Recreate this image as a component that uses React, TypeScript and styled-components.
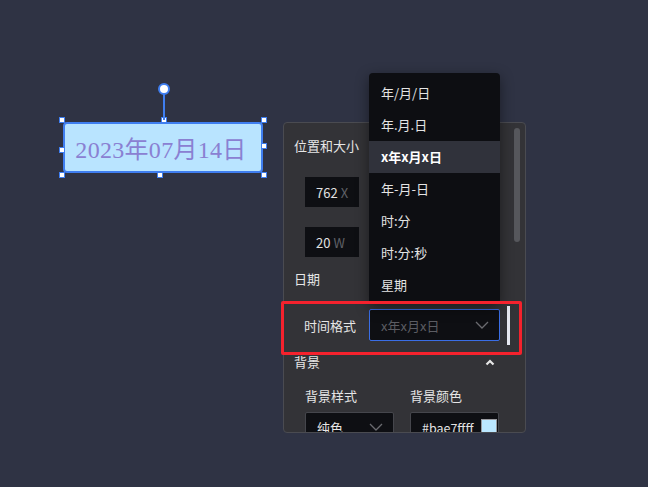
import React from "react";
import styled, { createGlobalStyle } from "styled-components";

const GlobalStyle = createGlobalStyle`
  html, body {
    margin: 0;
    padding: 0;
    background: #2f3344;
    overflow: hidden;
  }
  #root {
    height: 100vh;
  }
  * {
    box-sizing: border-box;
  }
`;

const Canvas = styled.div`
  position: relative;
  width: 100%;
  height: 100%;
  font-family: "Noto Sans CJK SC", "Noto Sans", sans-serif;
`;

/* ---------- date widget on the canvas ---------- */

const Widget = styled.div`
  position: absolute;
  left: 63px;
  top: 122px;
  width: 200px;
  height: 51px;
  border: 2px solid #3f7ef0;
  border-radius: 4px;
  background: #b9e4ff;
  display: flex;
  align-items: center;
  justify-content: center;
`;

const DateText = styled.span`
  font-family: "Liberation Serif", "Noto Sans CJK SC", serif;
  font-size: 24px;
  color: #8a80d2;
  margin-left: -4px;
  letter-spacing: 0.3px;
`;

const Handle = styled.span<{ $x: number; $y: number }>`
  position: absolute;
  left: ${(p) => p.$x - 3}px;
  top: ${(p) => p.$y - 3}px;
  width: 6px;
  height: 6px;
  background: #fff;
  border: 1.5px solid #3f7ef0;
`;

const RotateLine = styled.span`
  position: absolute;
  left: 98px;
  top: -32px;
  width: 2px;
  height: 28px;
  background: #3f7ef0;
`;

const RotateKnob = styled.span`
  position: absolute;
  left: 93px;
  top: -41px;
  width: 12px;
  height: 12px;
  border-radius: 50%;
  background: #fff;
  border: 2px solid #3f7ef0;
`;

const handles: [number, number][] = [
  [-3, -4],
  [99, -4],
  [199, -4],
  [-3, 26],
  [199, 22],
  [-3, 51],
  [95, 51],
  [199, 51],
];

/* ---------- property panel ---------- */

const Panel = styled.div`
  position: absolute;
  left: 283px;
  top: 122px;
  width: 243px;
  height: 311px;
  border: 1px solid #4a4b51;
  border-radius: 4px;
  background: #333337;
`;

const Body = styled.div`
  height: 100%;
  overflow: hidden;
  padding: 13px 0 0 10px;
  display: flex;
  flex-direction: column;
  color: #e6e6e6;
  font-size: 13px;
`;

const Title = styled.div<{ $mt?: number }>`
  height: 20px;
  line-height: 20px;
  margin-top: ${(p) => p.$mt ?? 0}px;
  display: flex;
  align-items: center;
  justify-content: space-between;
  padding-right: 30px;
`;

const Row = styled.div<{ $mt: number; $gap?: number }>`
  display: flex;
  align-items: center;
  gap: ${(p) => p.$gap ?? 16}px;
  margin-top: ${(p) => p.$mt}px;
  padding-left: 11px;
`;

const NumberBox = styled.div`
  width: 54px;
  height: 30px;
  background: #0e0f13;
  display: flex;
  align-items: center;
  padding-left: 11px;
  gap: 3px;
  color: #e2e2e2;
`;

const Unit = styled.span`
  color: #5f6066;
`;

const FormatRow = styled.div`
  display: flex;
  align-items: center;
  height: 32px;
  margin-top: 20px;
  padding-left: 10px;
`;

const FieldLabel = styled.span`
  width: 65px;
  color: #e6e6e6;
`;

const Select = styled.div<{ $w: number; $active?: boolean; $pr?: number }>`
  width: ${(p) => p.$w}px;
  height: ${(p) => (p.$active ? 32 : 30)}px;
  flex-shrink: 0;
  background: #0e0f13;
  border: 1px solid ${(p) => (p.$active ? "#3a6ee6" : "#45464c")};
  border-radius: 2px;
  display: flex;
  align-items: center;
  justify-content: space-between;
  padding: 0 ${(p) => p.$pr ?? 10}px 0 11px;
  overflow: hidden;
`;

const Placeholder = styled.span`
  color: #5c5d63;
`;

const Cursor = styled.span`
  width: 3px;
  height: 39px;
  margin-left: 7px;
  background: #e6e8f0;
  flex-shrink: 0;
`;

const Labels = styled.div`
  display: flex;
  margin-top: 14px;
  padding-left: 11px;
  height: 20px;
  line-height: 20px;
  gap: 16px;
  span {
    width: 89px;
  }
`;

const Swatch = styled.span`
  width: 16px;
  height: 16px;
  flex-shrink: 0;
  background: #bae7ff;
  border: 1px solid #9a9ba0;
`;

const ColorValue = styled.span`
  color: #e2e2e2;
  font-size: 12.5px;
  white-space: nowrap;
`;

const Scrollbar = styled.span`
  position: absolute;
  left: 230px;
  top: 5px;
  width: 6px;
  height: 114px;
  border-radius: 3px;
  background: #56575c;
`;

const Dropdown = styled.ul`
  position: absolute;
  left: 85px;
  top: -50px;
  width: 131px;
  margin: 0;
  padding: 4px 0 3px;
  list-style: none;
  background: #0d0e12;
  border-radius: 4px;
  box-shadow: 0 4px 14px rgba(0, 0, 0, 0.45);
  z-index: 2;
`;

const Option = styled.li<{ $active?: boolean }>`
  height: 32px;
  line-height: 32px;
  padding-left: 12px;
  font-size: 13px;
  color: ${(p) => (p.$active ? "#ffffff" : "#e4e4e4")};
  font-weight: ${(p) => (p.$active ? 700 : 400)};
  background: ${(p) => (p.$active ? "#30323b" : "transparent")};
`;

const Highlight = styled.div`
  position: absolute;
  left: -3px;
  top: 178px;
  width: 241px;
  height: 54px;
  border: 3px solid #f5222d;
  border-radius: 2px;
  z-index: 3;
  pointer-events: none;
`;

const Chevron = ({ up, color }: { up?: boolean; color: string }) => (
  <svg width={up ? 10 : 14} height={up ? 7 : 8} viewBox={up ? "0 0 10 7" : "0 0 14 8"}>
    <polyline
      points={up ? "1.5,5.5 5,2 8.5,5.5" : "1,1 7,7 13,1"}
      fill="none"
      stroke={color}
      strokeWidth={up ? 2.2 : 1.3}
    />
  </svg>
);

const formats = ["年/月/日", "年.月.日", "x年x月x日", "年-月-日", "时:分", "时:分:秒", "星期"];

export default function App() {
  return (
    <>
      <GlobalStyle />
      <Canvas>
        <Widget>
          <DateText>2023年07月14日</DateText>
          {handles.map(([x, y], i) => (
            <Handle key={i} $x={x} $y={y} />
          ))}
          <RotateLine />
          <RotateKnob />
        </Widget>

        <Panel>
          <Body>
            <Title>位置和大小</Title>
            <Row $mt={21}>
              <NumberBox>
                762<Unit>X</Unit>
              </NumberBox>
            </Row>
            <Row $mt={20}>
              <NumberBox>
                20<Unit>W</Unit>
              </NumberBox>
            </Row>
            <Title $mt={12}>日期</Title>
            <FormatRow>
              <FieldLabel>时间格式</FieldLabel>
              <Select $w={131} $active>
                <Placeholder>x年x月x日</Placeholder>
                <Chevron color="#6a6b70" />
              </Select>
              <Cursor />
            </FormatRow>
            <Title $mt={11}>
              背景
              <Chevron up color="#e6e6e6" />
            </Title>
            <Labels>
              <span>背景样式</span>
              <span>背景颜色</span>
            </Labels>
            <Row $mt={6}>
              <Select $w={89}>
                <span>纯色</span>
                <Chevron color="#6a6b70" />
              </Select>
              <Select $w={89} $pr={1}>
                <ColorValue>#bae7ffff</ColorValue>
                <Swatch />
              </Select>
            </Row>
          </Body>
          <Scrollbar />
          <Dropdown>
            {formats.map((f) => (
              <Option key={f} $active={f === "x年x月x日"}>
                {f}
              </Option>
            ))}
          </Dropdown>
          <Highlight />
        </Panel>
      </Canvas>
    </>
  );
}
